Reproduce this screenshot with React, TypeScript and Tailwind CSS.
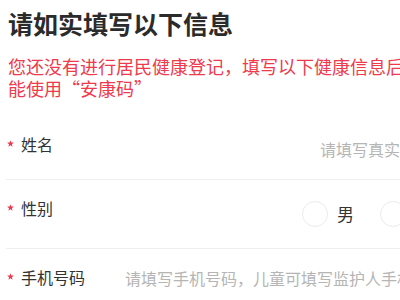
import React from "react";

const font = "font-['Noto_Sans_CJK_SC','Noto_Sans',sans-serif]";

/* ── Required marker ── */
function Star() {
  return (
    <svg viewBox="0 0 10 10" className="w-[7px] h-[7px] ml-[1px] mt-[6px] shrink-0">
      <polygon
        points="5,0.3 6.2,3.6 9.8,3.7 7,5.9 8,9.5 5,7.4 2,9.5 3,5.9 0.2,3.7 3.8,3.6"
        fill="#ee3a4c"
      />
    </svg>
  );
}

function Label({ text }: { text: string }) {
  return (
    <div className="flex items-start w-[119px] shrink-0">
      <Star />
      <span className="ml-[7px] text-[16px] leading-[20px] text-[#333]">{text}</span>
    </div>
  );
}

function Radio({ label }: { label: string }) {
  return (
    <div className="flex items-center">
      <span className="w-[26px] h-[26px] rounded-full border border-[#ebebeb]" />
      <span className="ml-[9px] text-[17px] leading-[20px] text-[#333]">{label}</span>
    </div>
  );
}

export default function App() {
  return (
    <div className={`w-full h-[300px] overflow-hidden bg-white ${font}`}>
      <div className="w-[440px]">
        {/* Header */}
        <div className="px-2 pt-[6px]">
          <h1 className="text-[25px] leading-[34px] font-bold text-[#2b2b2b]">请如实填写以下信息</h1>
          <p className="mt-[15px] text-[18px] leading-[22px] text-[#ee3a4c]">
            您还没有进行居民健康登记，填写以下健康信息后才能使用“安康码”
          </p>
        </div>

        {/* Form */}
        <div className="mt-[17px] pl-[6px] pr-2">
          <div className="flex items-start pt-[18px] pb-[20px] border-b border-[#efefef]">
            <Label text="姓名" />
            <div className="flex-1 mt-[5px] text-right text-[16px] leading-[20px] text-[#b5b5b5]">
              请填写真实姓名
            </div>
          </div>

          <div className="flex items-start pt-[18px] pb-[21px] border-b border-[#efefef]">
            <Label text="性别" />
            <div className="flex-1 mt-[3px] flex justify-end gap-[26px]">
              <Radio label="男" />
              <Radio label="女" />
            </div>
          </div>

          <div className="flex items-start pt-[18px] pb-[20px] border-b border-[#efefef]">
            <Label text="手机号码" />
            <div className="flex-1 mt-[1px] text-[16px] leading-[20px] text-[#b5b5b5] whitespace-nowrap">
              请填写手机号码，儿童可填写监护人手机号码
            </div>
          </div>
        </div>
      </div>
    </div>
  );
}
